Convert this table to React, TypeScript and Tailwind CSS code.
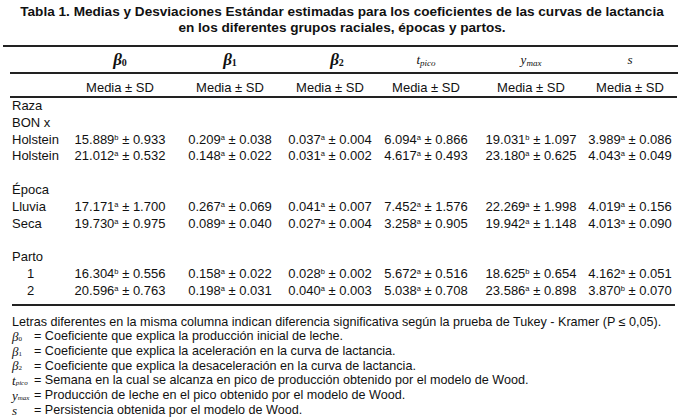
import React from "react";

type Cell = { v: string; l: string; sd: string };

const c = (v: string, l: string, sd: string): Cell => ({ v, l, sd });

const groups: { title: string; rows: { label: React.ReactNode; cells?: Cell[] }[] }[] = [
  {
    title: "Raza",
    rows: [
      { label: "BON x" },
      {
        label: "Holstein",
        cells: [
          c("15.889", "b", "0.933"),
          c("0.209", "a", "0.038"),
          c("0.037", "a", "0.004"),
          c("6.094", "a", "0.866"),
          c("19.031", "b", "1.097"),
          c("3.989", "a", "0.086"),
        ],
      },
      {
        label: "Holstein",
        cells: [
          c("21.012", "a", "0.532"),
          c("0.148", "a", "0.022"),
          c("0.031", "a", "0.002"),
          c("4.617", "a", "0.493"),
          c("23.180", "a", "0.625"),
          c("4.043", "a", "0.049"),
        ],
      },
    ],
  },
  {
    title: "Época",
    rows: [
      {
        label: "Lluvia",
        cells: [
          c("17.171", "a", "1.700"),
          c("0.267", "a", "0.069"),
          c("0.041", "a", "0.007"),
          c("7.452", "a", "1.576"),
          c("22.269", "a", "1.998"),
          c("4.019", "a", "0.156"),
        ],
      },
      {
        label: "Seca",
        cells: [
          c("19.730", "a", "0.975"),
          c("0.089", "a", "0.040"),
          c("0.027", "a", "0.004"),
          c("3.258", "a", "0.905"),
          c("19.942", "a", "1.148"),
          c("4.013", "a", "0.090"),
        ],
      },
    ],
  },
  {
    title: "Parto",
    rows: [
      {
        label: <span className="pl-[15px]">1</span>,
        cells: [
          c("16.304", "b", "0.556"),
          c("0.158", "a", "0.022"),
          c("0.028", "b", "0.002"),
          c("5.672", "a", "0.516"),
          c("18.625", "b", "0.654"),
          c("4.162", "a", "0.051"),
        ],
      },
      {
        label: <span className="pl-[15px]">2</span>,
        cells: [
          c("20.596", "a", "0.763"),
          c("0.198", "a", "0.031"),
          c("0.040", "a", "0.003"),
          c("5.038", "a", "0.708"),
          c("23.586", "a", "0.898"),
          c("3.870", "b", "0.070"),
        ],
      },
    ],
  },
];

const grid = "grid grid-cols-[70px_100px_120px_80px_112px_98px_100px]";

function Beta({ n }: { n: string }) {
  return (
    <span className="font-['Liberation_Serif',serif] italic font-bold text-[17px]">
      β<span className="not-italic text-[10px] align-[-1px]">{n}</span>
    </span>
  );
}

function Sym({ s, sub }: { s: string; sub?: string }) {
  return (
    <span className="font-['Liberation_Serif',serif] italic text-[13px]">
      {s}
      {sub && <span className="text-[9px] align-[-2px]">{sub}</span>}
    </span>
  );
}

function Val({ cell }: { cell: Cell }) {
  return (
    <div className="flex justify-center whitespace-nowrap">
      <span>
        {cell.v}
        <sup className="text-[7.5px] top-[-4px]">{cell.l}</sup> ± {cell.sd}
      </span>
    </div>
  );
}

const notes: [React.ReactNode, string][] = [
  [<>β<span className="not-italic text-[7px]">0</span></>, "Coeficiente que explica la producción inicial de leche."],
  [<>β<span className="not-italic text-[7px]">1</span></>, "Coeficiente que explica la aceleración en la curva de lactancia."],
  [<>β<span className="not-italic text-[7px]">2</span></>, "Coeficiente que explica la desaceleración en la curva de lactancia."],
  [<>t<span className="text-[7px]">pico</span></>, "Semana en la cual se alcanza en pico de producción obtenido por el modelo de Wood."],
  [<>y<span className="text-[7px]">max</span></>, "Producción de leche en el pico obtenido por el modelo de Wood."],
  [<>s</>, "Persistencia obtenida por el modelo de Wood."],
];

export default function App() {
  return (
    <div className="w-[684px] h-[417px] bg-white text-[#111] font-['Liberation_Sans',Arial,sans-serif] text-[13px] overflow-hidden">
      {/* Title */}
      <div className="pt-[4px] text-center font-bold text-[13.6px] leading-[16px]">
        <p>Tabla 1. Medias y Desviaciones Estándar estimadas para los coeficientes de las curvas de lactancia</p>
        <p>en los diferentes grupos raciales, épocas y partos.</p>
      </div>

      <div className="mt-[9px] ml-[3px] w-[675px] h-[2px] bg-[#222]" />

      {/* Header */}
      <div className={`${grid} h-[25px] items-center`}>
        <div />
        <div className="flex justify-center"><Beta n="0" /></div>
        <div className="flex justify-center"><Beta n="1" /></div>
        <div className="flex justify-center pl-[14px]"><Beta n="2" /></div>
        <div className="flex justify-center"><Sym s="t" sub="pico" /></div>
        <div className="flex justify-center"><Sym s="y" sub="max" /></div>
        <div className="flex justify-center"><Sym s="s" /></div>
      </div>
      <div className="ml-[10px] w-[668px] h-[2px] bg-[#222]" />
      <div className={`${grid} h-[22px] items-center leading-none pt-[4px]`}>
        <div />
        {["0", "1", "2", "3", "4", "5"].map((k) => (
          <div key={k} className="flex justify-center">Media ± SD</div>
        ))}
      </div>
      <div className="ml-[10px] w-[667px] h-[2px] bg-[#222]" />

      {/* Body */}
      <div className="leading-[16.8px]">
        {groups.map((g, gi) => (
          <div key={g.title}>
            {gi > 0 && <div className="h-[16.8px]" />}
            <div className="pl-[12px]">{g.title}</div>
            {g.rows.map((r, ri) => (
              <div key={ri} className={grid}>
                <div className="pl-[12px] whitespace-nowrap">{r.label}</div>
                {r.cells?.map((cell, ci) => <Val key={ci} cell={cell} />)}
              </div>
            ))}
          </div>
        ))}
      </div>
      <div className="mt-[4px] ml-[12px] w-[663px] h-[2px] bg-[#222]" />

      {/* Notes */}
      <div className="pt-[9px] pl-[12px] text-[12.6px] leading-[14.7px]">
        <p className="whitespace-nowrap h-[14.7px]">Letras diferentes en la misma columna indican diferencia significativa según la prueba de Tukey - Kramer (P ≤ 0,05).</p>
        {notes.map(([sym, txt], i) => (
          <div key={i} className="flex h-[14.7px] items-center">
            <span className="w-[22px] shrink-0 font-['Liberation_Serif',serif] italic text-[13px] leading-none">{sym}</span>
            <span className="leading-none whitespace-nowrap">= {txt}</span>
          </div>
        ))}
      </div>
    </div>
  );
}
